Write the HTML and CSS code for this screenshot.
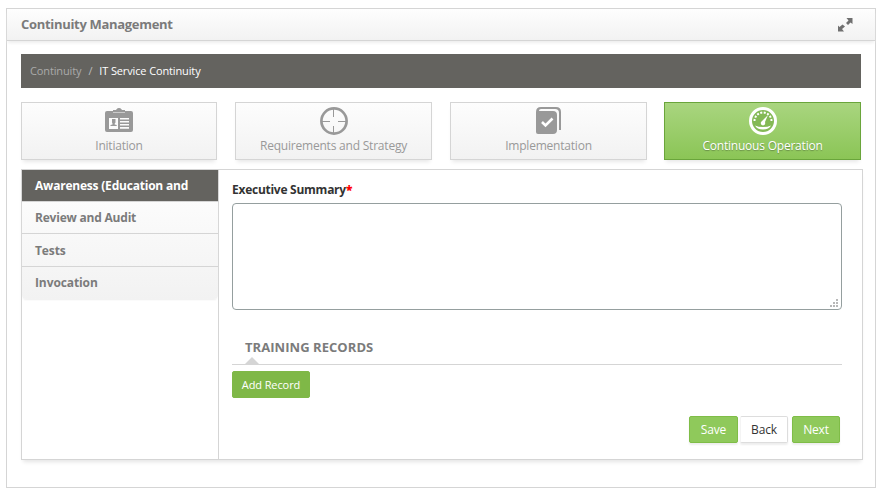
FILE: index.html
```html
<!DOCTYPE html>
<html lang="en">
<head>
<meta charset="utf-8">
<title>Continuity Management</title>
<link rel="stylesheet" href="styles.css">
</head>
<body>
<main class="panel">
  <header class="panel-head">
    <h1>Continuity Management</h1>
    <svg class="expand" width="15" height="15" viewBox="0 0 15 15"><path d="M8.500 1H14.500v6l-2-1.500-2.500 2.500-2-2 2.500-2.500zM0 8.500l1.500 1.500L4.500 7.500l2.500 2-3 2.500L6 14.500H0z"/></svg>
  </header>
  <div class="panel-body">
    <nav class="breadcrumb"><a>Continuity</a><span class="sep">/</span><span class="current">IT Service Continuity</span></nav>
    <div class="steps">
      <div class="step">
        <svg width="28" height="28" viewBox="0 0 28 28"><path fill="currentColor" d="M2 4h6v2h12V4h6q2 0 2 2v17q0 2-2 2H2q-2 0-2-2V6q0-2 2-2zM8 5.500V3h3q.5-1 1-1 0-1 2-1t2 1q.5 0 1 1h3v2.500z"/><path fill="#fbfbfb" d="M4 11h9v11H4zM15 11h9v1.600h-9zM15 14h9v1.600h-9zM15 17h9v1.600h-9zM15 20h9v1.800h-9z"/><path fill="currentColor" d="M7 12h3.500v3.500l-.8 1v1l2 .5v1H5.500v-1l2-.5v-1l-.5-1z"/></svg>
        <span>Initiation</span>
      </div>
      <div class="step">
        <svg width="28" height="28" viewBox="0 0 28 28" fill="none" stroke="currentColor"><circle cx="14" cy="14" r="12.600" stroke-width="2.700"/><path stroke-width="1" d="M13.500 2v8M13.500 19v7M2 14.500h8M18 14.500h8"/></svg>
        <span>Requirements and Strategy</span>
      </div>
      <div class="step">
        <svg width="26" height="28" viewBox="0 0 26 28"><path fill="currentColor" d="M5 0h15q5 0 5 5v18h-2V6q0-4-4-4H5q-2 0-2 2h14q4 0 4 4v15q0 4-4 4H2q-2 0-2-2V5q0-5 5-5z"/><path fill="none" stroke="#fff" stroke-width="2.600" d="M6 15l3.500 3.500 7-7"/></svg>
        <span>Implementation</span>
      </div>
      <div class="step active">
        <svg width="28" height="28" viewBox="0 0 28 28"><circle cx="14" cy="14" r="12.500" fill="#84b955" stroke="#fff" stroke-width="3"/><path fill="none" stroke="#fff" stroke-width="2" stroke-dasharray="2 1.500" d="M5.500 14a8.500 8.500 0 0 1 17 0"/><path fill="#fff" d="M19 8l-3 7q1 3-2 3.500-3-.5-2-3.500zM6 18.500q3 1.500 8 1.500t8-1.500q-2 4-8 4t-8-4z"/></svg>
        <span>Continuous Operation</span>
      </div>
    </div>
    <section class="content">
      <aside class="side">
        <ul class="menu">
          <li class="selected">Awareness (Education and</li>
          <li>Review and Audit</li>
          <li class="tall">Tests</li>
          <li>Invocation</li>
        </ul>
      </aside>
      <div class="form">
        <label class="field-label" for="summary">Executive Summary<b class="required">*</b></label>
        <div class="area">
          <textarea id="summary"></textarea>
          <svg class="grip" width="8" height="8" viewBox="0 0 8 8"><path d="M6 0h2v2H6zM3 3h2v2H3zM6 3h2v2H6zM0 6h2v2H0zM3 6h2v2H3zM6 6h2v2H6z"/></svg>
        </div>
        <h2 class="records">TRAINING RECORDS</h2>
        <button class="btn add">Add Record</button>
        <div class="actions">
          <button class="btn save">Save</button><button class="btn back">Back</button><button class="btn next">Next</button>
        </div>
      </div>
    </section>
  </div>
</main>
</body>
</html>
```
FILE: styles.css
```css
* { box-sizing: border-box; }
body {
  margin: 0;
  background: #fff;
  font-family: "Open Sans", "Liberation Sans", sans-serif;
  font-size: 11px;
  color: #333;
}
.panel {
  width: 870px;
  height: 480px;
  margin: 8px 0 0 6px;
  border: 1px solid #d5d5d5;
}
.panel-head {
  display: flex;
  justify-content: space-between;
  height: 32px;
  padding: 0 22px 0 14px;
  border-bottom: 1px solid #d5d5d5;
  background: linear-gradient(#fefefe, #f2f2f2);
  box-shadow: 0 3px 3px -1px #eee;
}
h1 { margin: 0; font-size: 13px; line-height: 30px; letter-spacing: -.31px; color: #7b7b7b; }
.expand { margin-top: 8px; fill: #707070; }
.panel-body { padding: 13px 12px 0 14px; }
.breadcrumb {
  display: flex;
  width: 840px;
  height: 34px;
  padding-left: 9px;
  background: #64635f;
  color: #aaa;
  line-height: 34px;
  letter-spacing: -.13px;
}
.sep { margin: 0 7px; color: #bbb; }
.current { color: #fff; }
.steps {
  display: grid;
  grid-template-columns: 196px 197px 197px 197px;
  gap: 18px;
  width: 840px;
  margin-top: 14px;
}
.step {
  display: flex;
  flex-direction: column;
  align-items: center;
  height: 58px;
  padding-top: 4px;
  border: 1px solid #d5d5d5;
  background: linear-gradient(#fdfdfd, #f2f2f2);
  box-shadow: 0 4px 4px -2px #e8e8e8;
  color: #999;
  font-size: 12px;
  line-height: 22px;
  letter-spacing: -.21px;
}
.step svg { flex: none; }
.step.active {
  width: 197px;
  margin-left: -1px;
  border-color: #6aa53b;
  background: linear-gradient(#a9d57f, #8bc556);
  color: #fff;
  text-shadow: 0 1px 1px #698f48;
}
.content {
  display: flex;
  width: 842px;
  height: 291px;
  margin-top: 9px;
  border: 1px solid #d5d5d5;
  box-shadow: 0 4px 4px -2px #e5e5e5;
}
.side { width: 197px; border-right: 1px solid #d5d5d5; }
.menu {
  margin: 0;
  padding: 0;
  list-style: none;
  border-radius: 0 0 4px 4px;
  background: linear-gradient(#fff, #f2f2f2);
  box-shadow: 0 2px 2px -1px #eee;
  color: #7b7b7b;
  font-size: 12px;
  font-weight: 700;
  letter-spacing: -.21px;
}
.menu li { height: 32px; padding-left: 13px; border-bottom: 1px solid #d5d5d5; line-height: 32px; }
.menu .tall { height: 33px; line-height: 33px; }
.menu li:nth-child(n+3) { letter-spacing: -.1px; }
.menu li:last-child { border-bottom: 0; }
.menu .selected { background: #64635f; color: #fff; }
.form { flex: 1; padding: 11px 20px 0 13px; }
.field-label { display: block; height: 22px; font-size: 12px; font-weight: 700; line-height: 18px; letter-spacing: -.26px; }
.required { color: #f00; }
.area { position: relative; height: 107px; }
textarea {
  display: block;
  width: 610px;
  height: 107px;
  border: 1px solid #959f9f;
  border-radius: 4px;
  outline: 0;
  resize: none;
}
.grip { position: absolute; right: 4px; bottom: 3px; fill: #b8b8b8; }
.records {
  position: relative;
  height: 55px;
  margin: 0;
  padding: 27px 0 0 13px;
  border-bottom: 1px solid #d5d5d5;
  color: #7b7b7b;
  font-size: 13px;
  line-height: 20px;
  letter-spacing: .05px;
}
.records::after {
  content: "";
  position: absolute;
  left: 13px;
  bottom: 0;
  border: solid transparent;
  border-width: 0 7px 7px;
  border-bottom-color: #d5d5d5;
}
.btn {
  display: block;
  height: 27px;
  padding: 0;
  border: 1px solid #7fbd47;
  border-radius: 2px;
  background: #8fc95b;
  color: #fff;
  font: 11px/24px "Open Sans", "Liberation Sans", sans-serif;
}
.add { width: 78px; margin-top: 6px; background: #7fb847; border-color: #7fb847; letter-spacing: -.1px; }
.actions { display: flex; margin: 18px 0 0 457px; }
.actions .btn { font-size: 12px; box-shadow: 0 2px 2px #eee; letter-spacing: -.15px; }
.actions .save { width: 49px; }
.actions .back { width: 48px; margin: 0 4px 0 2px; border-color: #ddd; border-left-color: #f4f4f4; background: #fff; color: #333; }
.actions .next { width: 48px; }
```
